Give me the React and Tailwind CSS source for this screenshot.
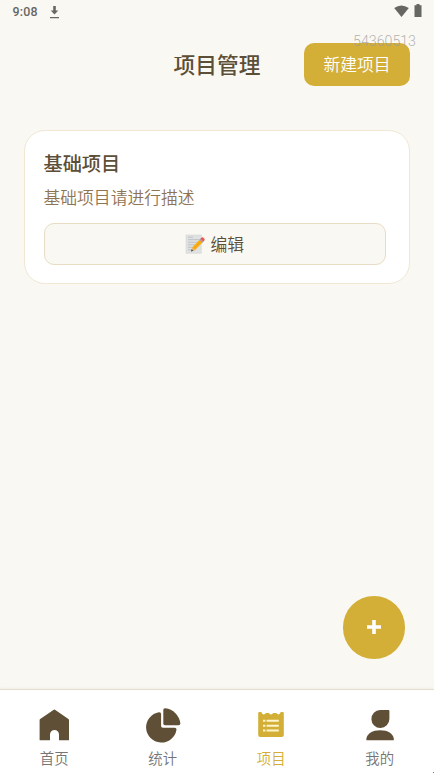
import React from 'react';

function Memo() {
  return (
    <svg className="block h-[20px] w-[20px]" viewBox="0 0 20 20">
      <path d="M1 1H16.3V19.3H1Z" fill="#dfe1e2" stroke="#cfd2d3" strokeWidth=".5" />
      <path d="M3 3.2h5M3 5.7h11M3 8.3h11M3 10.8h8M3 13.3h5M3 15.8h4" stroke="#bcc0c2" strokeWidth=".9" />
      <path d="M6 17.5L7.3 13.2L15.2 5L18 8L10.2 16Z" fill="#fbb017" />
      <path d="M8.7 14.6L16.6 6.5" stroke="#f29a0c" strokeWidth="1" />
      <path d="M6 17.5L7.3 13.2L10.2 16Z" fill="#e3b77b" />
      <path d="M6 17.5L6.7 15.2L8.3 16.7Z" fill="#3f4446" />
      <path d="M14.4 5.8L15.4 4.8L18.3 7.7L17.3 8.7Z" fill="#9aa5ab" />
      <path d="M15.4 4.8L16.6 3.6Q17.6 2.9 18.7 4L19.2 4.5Q20 5.6 19.4 6.5L18.3 7.7Z" fill="#ef5350" />
    </svg>
  );
}

function HomeIcon() {
  return (
    <svg className="block h-[36px] w-[36px]" viewBox="0 0 36 36">
      <path d="M17.8 2.7Q18.4 2.2 19 2.7L32.4 12Q33 12.5 33 13.2V32.7Q33 33.3 32.4 33.3H23V27.5a4.5 4.5 0 0 0-9 0V33.3H4.2Q3.6 33.3 3.6 32.7V13.2Q3.6 12.5 4.2 12Z" fill="#5f4f36" />
    </svg>
  );
}

function StatsIcon() {
  return (
    <svg className="block h-[36px] w-[36px]" viewBox="0 0 36 36">
      <path d="M14 5.2Q16.1 5 16.1 7V19Q16.1 20.7 17.8 20.7H29.7Q31.7 20.7 31.5 22.8A15.3 15.3 0 1 1 14 5.2Z" fill="#5f4f36" />
      <path d="M18.3 3Q18.3 1.1 20.3 1.3A17 17 0 0 1 35.3 16.3Q35.4 18.2 33.5 18.2H20Q18.3 18.2 18.3 16.5Z" fill="#5f4f36" />
    </svg>
  );
}

function ProjectIcon() {
  return (
    <svg className="block h-[36px] w-[36px]" viewBox="0 0 36 36">
      <path d="M6.2 5H8.3Q9 7.4 10.6 7.4T13 6H15.8Q16.6 7.4 18 7.4T20.2 6H23.2Q24.4 7.4 25.6 7.4T27.8 5H29.8Q30.8 5 30.8 6V28Q30.8 30 28.8 30H7.2Q5.2 30 5.2 28V6Q5.2 5 6.2 5Z" fill="#d3af37" />
      <path d="M10 13.7h2.4M10 18.7h2.4M10 23.6h2.4M13.6 13.7H25.8M13.6 18.7H25.8M13.6 23.6H25.8" stroke="#fff5cb" strokeWidth="2" />
    </svg>
  );
}

function UserIcon() {
  return (
    <svg className="block h-[36px] w-[36px]" viewBox="0 0 36 36">
      <path d="M18.1 3H26.5Q27.4 3 27.4 3.9V12a9 9 0 1 1-9.3-9Z" fill="#5f4f36" />
      <path d="M4.4 33.3V31.6C5.2 26.4 10.4 23.2 18.2 23.2S31 26.4 31.8 31.6V33.3Z" fill="#5f4f36" />
    </svg>
  );
}

const tabs = [
  { label: '首页', Icon: HomeIcon },
  { label: '统计', Icon: StatsIcon },
  { label: '项目', Icon: ProjectIcon, active: true },
  { label: '我的', Icon: UserIcon },
];

export default function App() {
  return (
    <div className="relative flex h-[773px] w-[434px] flex-col overflow-hidden bg-[#f9f8f3] font-['Noto_Sans_CJK_SC',sans-serif] font-[350] text-[#5d4e37]">
      <div className="flex h-[24px] shrink-0 items-center pl-[12.5px] pr-[12px] text-[#666663]">
        <span className="font-[Roboto,sans-serif] text-[12.4px] font-medium leading-[24px] tracking-[0.2px]">9:08</span>
        <svg className="ml-[11px] mt-[-1px] block h-[14px] w-[11px]" viewBox="0 0 11 14">
          <path d="M4.2 1H6.8V5.6H9.3L5.5 9.4L1.7 5.6H4.2ZM1 12H10V13.2H1Z" fill="currentColor" />
        </svg>
        <div className="flex-1" />
        <svg className="mt-[-3px] block h-[12px] w-[15px]" viewBox="0 0 15 12">
          <path d="M.2 3Q7.4-2 14.8 3L7.5 12Z" fill="currentColor" />
        </svg>
        <svg className="mt-[-3px] ml-[5px] block h-[13px] w-[8px]" viewBox="0 0 8 13">
          <path d="M2.5 0H5.5V1.2H7.5V13H.5V1.2H2.5Z" fill="currentColor" />
        </svg>
      </div>

      <header className="mt-[19px] grid h-[43px] shrink-0 grid-cols-[1fr_auto_1fr] items-center px-[24px]">
        <span />
        <h1 className="mt-[-2px] text-[21.7px] font-medium leading-[43px]">项目管理</h1>
        <button className="h-[43px] w-[106px] justify-self-end rounded-[10px] bg-[#d3af37] text-[16.8px] leading-[43px] text-white">新建项目</button>
      </header>

      <main className="flex-1 px-[24px] pt-[44px]">
        <section className="h-[154px] rounded-[21px] border border-[#f1e7d5] bg-white pl-[18.5px] pr-[23px] pt-[18px]">
          <h2 className="text-[19.2px] font-medium leading-[28px]">基础项目</h2>
          <p className="mt-[8px] text-[16.8px] leading-[24px] text-[#8f7453]">基础项目请进行描述</p>
          <button className="mt-[14px] flex h-[42px] w-full items-center justify-center gap-[5px] rounded-[10px] border border-[#e8dcc5] bg-[#f9f8f3] text-[16.8px] leading-[40px]">
            <Memo />
            <span>编辑</span>
          </button>
        </section>
      </main>

      <nav className="grid h-[84px] shrink-0 grid-cols-4 border-t border-[#e5ddcd] bg-white pt-[17px] shadow-[0_-1px_2px_rgba(93,78,55,0.06)]">
        {tabs.map(({ label, Icon, active }) => (
          <div key={label} className={active ? 'flex flex-col items-center text-[#d3af37]' : 'flex flex-col items-center text-[#757575]'}>
            <Icon />
            <span className="mt-[5px] text-[14.4px] leading-[20px]">{label}</span>
          </div>
        ))}
      </nav>

      <button className="absolute left-[342.5px] top-[596px] flex h-[63px] w-[62.5px] items-center justify-center rounded-full bg-[#d3af37]">
        <svg className="mt-[-1px] block h-[14px] w-[14px]" viewBox="0 0 14 14">
          <path d="M7 0V14M0 7H14" stroke="white" strokeWidth="3.6" />
        </svg>
      </button>
      <span className="absolute right-[18px] top-[33px] font-[Roboto,sans-serif] text-[14.2px] font-light leading-[16px] text-[#999]/75">54360513</span>
      <span className="absolute bottom-0 right-0 h-px w-px bg-[#318bb0]" />
    </div>
  );
}
